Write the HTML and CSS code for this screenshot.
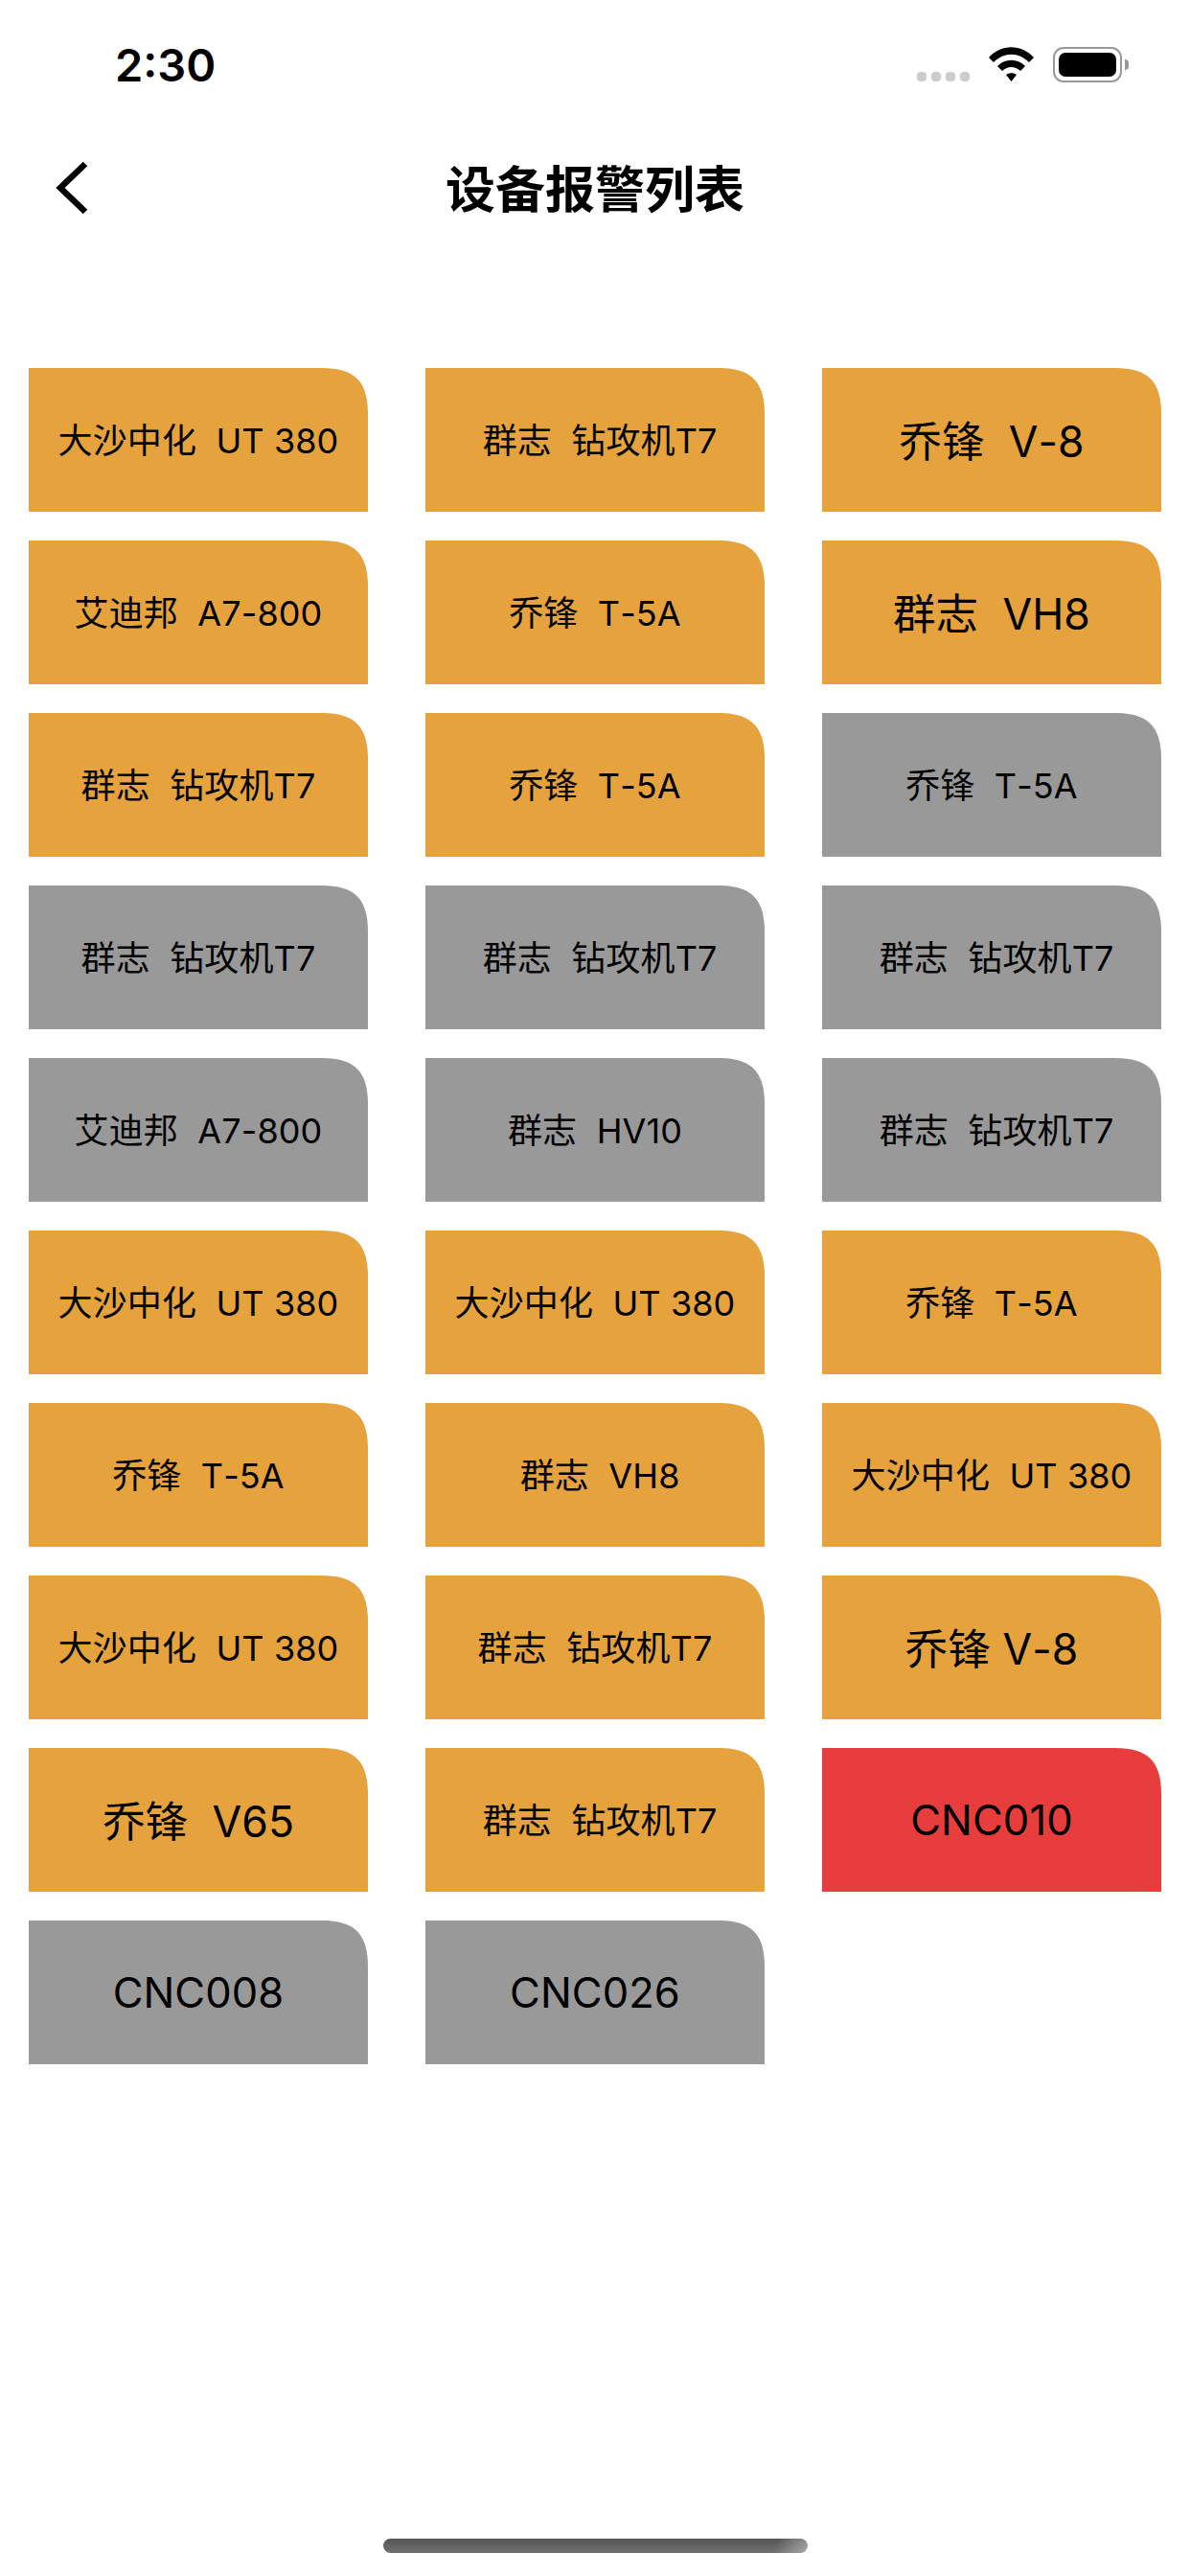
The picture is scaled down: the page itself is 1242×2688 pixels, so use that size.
FILE: index.html
```html
<!DOCTYPE html>
<html lang="zh">
<head>
    <title>设备报警列表</title>
    <link rel="stylesheet" href="styles.css">
</head>
<body>
    <div class="status-bar">
        <span class="time">2:30</span>
        <div class="status-icons">
            <div class="signal"><i></i><i></i><i></i><i></i></div>
            <svg class="wifi" width="47" height="36" viewBox="0 0 47 36">
                <path d="M0 11 C13 -3.500 34 -3.500 47 11 L42 16 C31 5 16 5 5 16 Z"/>
                <path d="M9 20 C17 11.500 30 11.500 38 20 L33 25 C27 19.500 20 19.500 14 25 Z"/>
                <path d="M18 29 C21 26.500 26 26.500 29 29 L23.500 36 Z"/>
            </svg>
            <div class="battery"><div class="battery-fill"></div></div>
            <div class="battery-nub"></div>
        </div>
    </div>

    <div class="nav">
        <svg class="back" width="34" height="56" viewBox="0 0 34 56">
            <path d="M31 3 L5 28 L31 53" fill="none" stroke="#000" stroke-width="6.500"/>
        </svg>
        <h1>设备报警列表</h1>
    </div>

    <div class="grid">
        <div class="tile orange">大沙中化  UT 380</div>
        <div class="tile orange"> 群志  钻攻机T7</div>
        <div class="tile orange big">乔锋  V-8</div>

        <div class="tile orange">艾迪邦  A7-800</div>
        <div class="tile orange">乔锋  T-5A</div>
        <div class="tile orange big">群志  VH8</div>

        <div class="tile orange">群志  钻攻机T7</div>
        <div class="tile orange">乔锋  T-5A</div>
        <div class="tile gray">乔锋  T-5A</div>

        <div class="tile gray">群志  钻攻机T7</div>
        <div class="tile gray"> 群志  钻攻机T7</div>
        <div class="tile gray"> 群志  钻攻机T7</div>

        <div class="tile gray">艾迪邦  A7-800</div>
        <div class="tile gray">群志  HV10</div>
        <div class="tile gray"> 群志  钻攻机T7</div>

        <div class="tile orange">大沙中化  UT 380</div>
        <div class="tile orange">大沙中化  UT 380</div>
        <div class="tile orange">乔锋  T-5A</div>

        <div class="tile orange">乔锋  T-5A</div>
        <div class="tile orange"> 群志  VH8</div>
        <div class="tile orange">大沙中化  UT 380</div>

        <div class="tile orange">大沙中化  UT 380</div>
        <div class="tile orange">群志  钻攻机T7</div>
        <div class="tile orange big">乔锋 V-8</div>

        <div class="tile orange big">乔锋  V65</div>
        <div class="tile orange"> 群志  钻攻机T7</div>
        <div class="tile red code">CNC010</div>

        <div class="tile gray code">CNC008</div>
        <div class="tile gray code">CNC026</div>
    </div>

    <div class="home-bar"></div>
</body>
</html>
```
FILE: styles.css
```css
body {
    margin: 0;
    height: 100vh;
    display: flex;
    flex-direction: column;
    background: white;
    color: black;
    font-family: Inter, "Noto Sans CJK SC", sans-serif;
}
.status-bar {
    height: 120px;
    display: flex;
    justify-content: space-between;
    align-items: flex-start;
    padding: 0 64px 0 120px;
}
.time {
    margin-top: 39px;
    font-size: 47px;
    line-height: 58px;
    font-weight: 600;
}
.status-icons {
    display: flex;
    align-items: flex-start;
    margin-top: 49px;
}
.signal {
    display: flex;
    gap: 5px;
    margin: 26px 20px 0 0;
}
.signal i {
    width: 10px;
    height: 10px;
    border-radius: 4px;
    background: #ccc;
}
.wifi {
    margin-right: 20px;
}
.battery {
    box-sizing: border-box;
    width: 72px;
    height: 37px;
    padding: 4px;
    border: 2px solid #999;
    border-radius: 11px;
}
.battery-fill {
    height: 100%;
    background: black;
    border-radius: 7px;
}
.battery-nub {
    width: 4px;
    height: 11px;
    margin: 13px 0 0 3px;
    background: #999;
    border-radius: 0 4px 4px 0;
}
.nav {
    height: 156px;
    position: relative;
    display: flex;
    justify-content: center;
    align-items: center;
}
.nav h1 {
    margin: 0 0 8px;
    font-size: 52px;
    font-weight: 700;
}
.back {
    position: absolute;
    left: 58px;
    top: 48px;
}
.grid {
    flex: 1;
    display: grid;
    grid-template-columns: repeat(3, 354px);
    grid-auto-rows: 150px;
    align-content: start;
    gap: 30px 60px;
    padding: 108px 30px 0;
}
.tile {
    box-sizing: border-box;
    padding-bottom: 4px;
    display: flex;
    justify-content: center;
    align-items: center;
    clip-path: path("M0 0H306C340 0 354 14 354 48V150H0Z");
    font-size: 36px;
    letter-spacing: 0.1px;
    font-kerning: none;
    white-space: pre;
}
.big {
    font-size: 44.5px;
}
.code {
    padding-bottom: 0;
    font-size: 43.5px;
}
.orange {
    background: #e5a23d;
}
.gray {
    background: #999;
}
.red {
    background: #e83d3d;
}
.home-bar {
    flex: none;
    width: 443px;
    height: 15px;
    margin: 0 auto 24px;
    border-radius: 8px;
    background: linear-gradient(105deg, transparent 92%, rgba(255,255,255,0.4)), linear-gradient(to bottom, #555, #707070);
}
```
